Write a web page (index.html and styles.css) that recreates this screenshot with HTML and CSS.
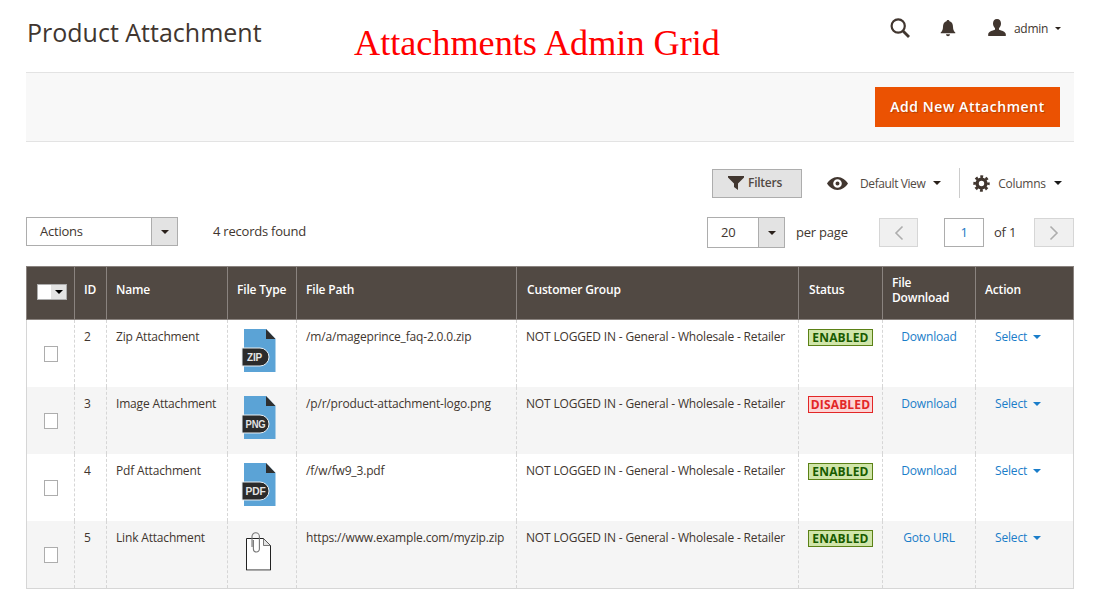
FILE: index.html
```html
<!DOCTYPE html>
<html lang="en">
<head>
    <meta charset="UTF-8">
    <title>Product Attachment</title>
    <link rel="stylesheet" href="styles.css">
</head>
<body>

<div class="page">
    <!-- Page header -->
    <header class="page-header">
        <h1>Product Attachment</h1>
        <div class="annotation">Attachments Admin Grid</div>
        <div class="admin-tools">
            <svg class="icon-search" width="22" height="22" viewBox="0 0 22 22"><circle cx="9.200" cy="9" r="6.600" fill="none" stroke="#41362f" stroke-width="2.200"/><path d="M14 14l6 6" stroke="#41362f" stroke-width="2.800" fill="none"/></svg>
            <svg class="icon-bell" width="16" height="18" viewBox="0 0 16 18"><path d="M8 1c1 0 1.400.6 1.500 1.300C12 3 13 5 13 8c0 3 1.200 4.500 2.300 5.500v.8H.7v-.8C1.800 12.500 3 11 3 8c0-3 1-5 3.500-5.700C6.600 1.600 7 1 8 1zM6 15.300h4C10 16.500 9 17.300 8 17.300s-2-.8-2-2z" fill="#41362f"/></svg>
            <svg class="icon-user" width="18" height="18" viewBox="0 0 18 18"><path d="M9 0c2.600 0 4 1.900 4 4.500 0 2-1 3.800-2 4.700v1.500c2.500.8 6.500 1.700 6.800 4.300V17H.2v-2c.3-2.600 4.300-3.500 6.800-4.300V9.200C6 8.300 5 6.500 5 4.500 5 1.900 6.400 0 9 0z" fill="#41362f"/></svg>
            <span class="admin-name">admin</span>
            <span class="caret caret-small"></span>
        </div>
    </header>

    <!-- Action bar -->
    <div class="action-bar">
        <button class="btn-primary">Add New Attachment</button>
    </div>

    <!-- Grid controls -->
    <div class="grid-tools">
        <button class="btn-filters">
            <svg width="16" height="14" viewBox="0 0 16 14"><path d="M0 0h16v1.500L10 7.500V14L6 11V7.500L0 1.500z" fill="#41362f"/></svg>
            Filters
        </button>
        <div class="tool-view">
            <svg width="21" height="13" viewBox="0 0 21 13"><path fill-rule="evenodd" d="M10.500 0C15 0 18.800 3 21 6.500 18.800 10 15 13 10.500 13S2.200 10 0 6.500C2.200 3 6 0 10.500 0zm0 2.200a4.300 4.300 0 100 8.600 4.300 4.300 0 000-8.600zm0 2.300a2 2 0 110 4 2 2 0 010-4z" fill="#41362f"/></svg>
            <span class="view-label">Default View</span>
            <span class="caret caret-small"></span>
        </div>
        <div class="tool-columns">
            <svg width="17" height="17" viewBox="0 0 17 17"><circle cx="8.500" cy="8.500" r="4.400" fill="none" stroke="#41362f" stroke-width="3.400"/><circle cx="8.500" cy="8.500" r="6.800" fill="none" stroke="#41362f" stroke-width="2.800" stroke-dasharray="2.800 2.540" stroke-dashoffset="1.400"/></svg>
            <span class="view-label">Columns</span>
            <span class="caret"></span>
        </div>
    </div>

    <div class="grid-pager">
        <div class="select-box actions-select">
            <span class="select-value">Actions</span>
            <span class="select-arrow"><span class="caret caret-small"></span></span>
        </div>
        <span class="records">4 records found</span>
        <div class="select-box per-page-select">
            <span class="select-value">20</span>
            <span class="select-arrow"><span class="caret caret-small"></span></span>
        </div>
        <span class="per-page">per page</span>
        <span class="page-btn page-prev"><svg width="10" height="16" viewBox="0 0 10 16"><path d="M8.500 1.500L2 8l6.500 6.500" fill="none" stroke="#adadad" stroke-width="1.600"/></svg></span>
        <span class="page-input">1</span>
        <span class="page-of">of 1</span>
        <span class="page-btn page-next"><svg width="10" height="16" viewBox="0 0 10 16"><path d="M1.500 1.500L8 8l-6.500 6.500" fill="none" stroke="#adadad" stroke-width="1.600"/></svg></span>
    </div>

    <!-- Attachments grid -->
    <table class="grid">
        <colgroup>
            <col class="col-check">
            <col class="col-id">
            <col class="col-name">
            <col class="col-type">
            <col class="col-path">
            <col class="col-group">
            <col class="col-status">
            <col class="col-download">
            <col class="col-action">
        </colgroup>
        <thead>
            <tr>
                <th><span class="mass-select"><span class="mass-box"></span><span class="mass-arrow"><span class="caret caret-small"></span></span></span></th>
                <th>ID</th>
                <th>Name</th>
                <th class="th-nowrap">File Type</th>
                <th>File Path</th>
                <th class="th-wide">Customer Group</th>
                <th class="th-wide">Status</th>
                <th>File Download</th>
                <th>Action</th>
            </tr>
        </thead>
        <tbody>
            <tr>
                <td class="cell-check"><span class="checkbox"></span></td>
                <td>2</td>
                <td>Zip Attachment</td>
                <td class="cell-icon">
                    <svg class="file-icon" width="34" height="44" viewBox="0 0 34 44"><path d="M2 0h22l9.500 10v33H2z" fill="#5ba3d6"/><path d="M24 0l9.500 10H24z" fill="#2f2f2f"/><path d="M0 19h18a9 9 0 010 18H0z" fill="#2b2b2b" stroke="#e8eef2"/><text x="5" y="32" class="file-ext" textLength="15" lengthAdjust="spacingAndGlyphs">ZIP</text></svg>
                </td>
                <td>/m/a/mageprince_faq-2.0.0.zip</td>
                <td>NOT LOGGED IN - General - Wholesale - Retailer</td>
                <td><span class="badge badge-enabled">ENABLED</span></td>
                <td class="cell-link"><a>Download</a></td>
                <td class="cell-select"><a>Select</a><span class="caret caret-small caret-blue"></span></td>
            </tr>
            <tr>
                <td class="cell-check"><span class="checkbox"></span></td>
                <td>3</td>
                <td>Image Attachment</td>
                <td class="cell-icon">
                    <svg class="file-icon" width="34" height="44" viewBox="0 0 34 44"><path d="M2 0h22l9.500 10v33H2z" fill="#5ba3d6"/><path d="M24 0l9.500 10H24z" fill="#2f2f2f"/><path d="M0 19h18a9 9 0 010 18H0z" fill="#2b2b2b" stroke="#e8eef2"/><text x="3.500" y="32" class="file-ext" textLength="20" lengthAdjust="spacingAndGlyphs">PNG</text></svg>
                </td>
                <td>/p/r/product-attachment-logo.png</td>
                <td>NOT LOGGED IN - General - Wholesale - Retailer</td>
                <td><span class="badge badge-disabled">DISABLED</span></td>
                <td class="cell-link"><a>Download</a></td>
                <td class="cell-select"><a>Select</a><span class="caret caret-small caret-blue"></span></td>
            </tr>
            <tr>
                <td class="cell-check"><span class="checkbox"></span></td>
                <td>4</td>
                <td>Pdf Attachment</td>
                <td class="cell-icon">
                    <svg class="file-icon" width="34" height="44" viewBox="0 0 34 44"><path d="M2 0h22l9.500 10v33H2z" fill="#5ba3d6"/><path d="M24 0l9.500 10H24z" fill="#2f2f2f"/><path d="M0 19h18a9 9 0 010 18H0z" fill="#2b2b2b" stroke="#e8eef2"/><text x="3.500" y="32" class="file-ext" textLength="20" lengthAdjust="spacingAndGlyphs">PDF</text></svg>
                </td>
                <td>/f/w/fw9_3.pdf</td>
                <td>NOT LOGGED IN - General - Wholesale - Retailer</td>
                <td><span class="badge badge-enabled">ENABLED</span></td>
                <td class="cell-link"><a>Download</a></td>
                <td class="cell-select"><a>Select</a><span class="caret caret-small caret-blue"></span></td>
            </tr>
            <tr>
                <td class="cell-check"><span class="checkbox"></span></td>
                <td>5</td>
                <td>Link Attachment</td>
                <td class="cell-icon">
                    <svg class="file-icon" width="34" height="44" viewBox="0 0 34 44"><path d="M4.500 8.500h17l7 7v24.500h-24z" fill="#fff" stroke="#222" stroke-width="1"/><path d="M21.500 8.500l7 7h-7z" fill="#e4e4e4" stroke="#444" stroke-width=".7"/><path d="M4.500 40.500h24" stroke="#aaa" stroke-width="1"/><path d="M10 17V6.500a3.700 3.700 0 017.400 0V19a3 3 0 01-6 0V10" fill="none" stroke="#777" stroke-width="1.100"/></svg>
                </td>
                <td>https://www.example.com/myzip.zip</td>
                <td>NOT LOGGED IN - General - Wholesale - Retailer</td>
                <td><span class="badge badge-enabled">ENABLED</span></td>
                <td class="cell-link"><a>Goto URL</a></td>
                <td class="cell-select"><a>Select</a><span class="caret caret-small caret-blue"></span></td>
            </tr>
        </tbody>
    </table>
</div>

</body>
</html>
```

FILE: styles.css
```css
html, body {
    margin: 0;
    padding: 0;
}
body {
    font-family: "Open Sans", sans-serif;
    font-size: 12px;
    color: #41362f;
    background-color: #fff;
    overflow: hidden;
}
.page {
    padding: 0 23px 0 26px;
}
.page-header {
    display: flex;
    align-items: flex-start;
    height: 72px;
}
h1 {
    margin: 13px 0 0 1px;
    width: 327px;
    font-size: 25px;
    line-height: 38px;
    font-weight: 400;
    white-space: nowrap;
}
.annotation {
    margin-top: 22px;
    font-family: "Liberation Serif", serif;
    font-size: 36.200px;
    line-height: 42px;
    color: #f00;
    white-space: nowrap;
}
.admin-tools {
    display: flex;
    align-items: center;
    margin-left: auto;
    margin-top: 18px;
    height: 20px;
    padding-right: 13px;
}
.icon-search {
    margin-right: 29px;
}
.icon-bell {
    margin-right: 32px;
}
.icon-user {
    margin-right: 8px;
}
.admin-name {
    margin-right: 7px;
    letter-spacing: -.3px;
}
.admin-tools .caret {
    border-width: 3.500px 3.500px 0;
}
.caret {
    display: inline-block;
    width: 0;
    height: 0;
    border-left: 4px solid transparent;
    border-right: 4px solid transparent;
    border-top: 4px solid #1a1a1a;
}
.caret-small {
    border-top-color: #2a211b;
}
.caret-blue {
    border-top-color: #1a7dc9;
    margin-left: 6px;
    vertical-align: 2px;
}
.action-bar {
    display: flex;
    justify-content: flex-end;
    align-items: center;
    height: 68px;
    padding-right: 14px;
    background-color: #f8f8f8;
    border-top: 1px solid #e3e3e3;
    border-bottom: 1px solid #e3e3e3;
}
.btn-primary {
    width: 185px;
    height: 40px;
    padding: 0 0 2px;
    background-color: #eb5202;
    color: #fff;
    font-family: "Open Sans", sans-serif;
    font-size: 14px;
    font-weight: 600;
    letter-spacing: .55px;
    text-shadow: 1px 1px 1px rgba(0, 0, 0, .25);
    border: none;
}
.grid-tools {
    display: flex;
    align-items: center;
    height: 30px;
    margin-top: 26px;
    padding-left: 686px;
}
.btn-filters {
    display: flex;
    align-items: center;
    justify-content: center;
    gap: 4px;
    width: 90px;
    height: 29px;
    padding: 0 4px 1px 0;
    background-color: #e3e3e3;
    border: 1px solid #adadad;
    color: #514943;
    font-family: "Open Sans", sans-serif;
    font-size: 12px;
    font-weight: 600;
    letter-spacing: -.25px;
}
.tool-view {
    display: flex;
    align-items: center;
    margin-left: 25px;
    padding-right: 18px;
    height: 30px;
    border-right: 1px solid #ccc;
}
.tool-columns {
    display: flex;
    align-items: center;
    margin-left: 13px;
}
.tool-columns .view-label {
    margin-left: 8px;
    margin-right: 0;
    letter-spacing: -.3px;
}
.tool-columns .caret {
    margin-left: 8px;
}
.view-label {
    margin-left: 12px;
    margin-right: 8px;
    font-size: 12px;
    letter-spacing: -.4px;
    color: #514943;
}
.grid-pager {
    display: flex;
    align-items: center;
    height: 31px;
    margin-top: 19px;
    font-size: 13px;
    letter-spacing: -.22px;
}
.select-box {
    display: flex;
    height: 29px;
    box-sizing: border-box;
    border: 1px solid #adadad;
    background-color: #fff;
}
.select-value {
    flex: 1;
    line-height: 27px;
    padding-left: 13px;
}
.select-arrow {
    display: flex;
    align-items: center;
    justify-content: center;
    width: 25px;
    background-color: #e3e3e3;
    border-left: 1px solid #adadad;
}
.actions-select {
    width: 152px;
    margin-bottom: 2px;
}
.records {
    margin-left: 35px;
    margin-bottom: 4px;
    width: 494px;
}
.per-page-select {
    width: 78px;
    height: 31px;
}
.per-page-select .select-value {
    line-height: 29px;
    padding-left: 13px;
}
.per-page {
    margin-left: 11px;
    margin-bottom: 2px;
    width: 83px;
}
.page-btn {
    display: flex;
    align-items: center;
    justify-content: center;
    box-sizing: border-box;
    width: 40px;
    height: 29px;
    background-color: #f0f0f0;
    border: 1px solid #d6d6d6;
}
.page-prev {
    width: 39px;
}
.page-input {
    box-sizing: border-box;
    width: 40px;
    height: 29px;
    margin-left: 26px;
    border: 1px solid #adadad;
    line-height: 27px;
    text-align: center;
    color: #1979c3;
}
.page-of {
    margin-left: 10px;
    margin-bottom: 2px;
    width: 40px;
}
.grid {
    width: 1047px;
    margin-top: 18px;
    table-layout: fixed;
    border-collapse: collapse;
    font-size: 12px;
    letter-spacing: -.17px;
}
.col-check { width: 48px; }
.col-id { width: 32px; }
.col-name { width: 121px; }
.col-type { width: 69px; }
.col-path { width: 220px; }
.col-group { width: 282px; }
.col-status { width: 84px; }
.col-download { width: 93px; }
.col-action { width: 98px; }
.grid th {
    height: 53px;
    box-sizing: border-box;
    padding: 0 9px 7px;
    background-color: #514943;
    border: 1px solid #8a837f;
    color: #fff;
    font-weight: 600;
    text-align: left;
    line-height: 15px;
}
.grid th.th-nowrap {
    white-space: nowrap;
}
.grid th.th-wide {
    padding-left: 10px;
}
.grid td {
    height: 67px;
    box-sizing: border-box;
    padding: 9px 9px 0;
    vertical-align: top;
    line-height: 16px;
    border-left: 1px dashed #d6d6d6;
    border-right: 1px dashed #d6d6d6;
    white-space: nowrap;
}
.grid tbody tr:nth-child(even) td {
    background-color: #f5f5f5;
}
.grid tbody tr:last-child td {
    height: 68px;
    border-bottom: 1px solid #d6d6d6;
}
.grid td:first-child {
    border-left: 1px solid #d6d6d6;
}
.grid td:last-child {
    border-right: 1px solid #d6d6d6;
}
.mass-select {
    display: flex;
    width: 28px;
    height: 14px;
    margin: 5px 0 0 1px;
    border: 1px solid #adadad;
}
.mass-box {
    width: 13px;
    background-color: #fff;
}
.mass-arrow {
    display: flex;
    align-items: center;
    justify-content: center;
    flex: 1;
    background-color: #e3e3e3;
}
.mass-arrow .caret {
    border-top-color: #000;
}
.grid td.cell-check {
    padding: 26px 0 0 17px;
}
.checkbox {
    display: block;
    width: 12px;
    height: 14px;
    background-color: #fff;
    border: 1px solid #adadad;
}
.grid td.cell-icon {
    padding: 9px 0 0 14px;
}
.file-icon {
    display: block;
    overflow: visible;
}
.file-ext {
    font-family: "Liberation Sans", sans-serif;
    font-size: 11px;
    font-weight: 700;
    fill: #e4e4e4;
}
.badge {
    display: block;
    box-sizing: border-box;
    width: 65px;
    height: 17px;
    line-height: 15px;
    text-align: center;
    font-weight: 700;
    letter-spacing: .15px;
}
.badge-enabled {
    background-color: #d0e5a9;
    border: 1px solid #5b8116;
    color: #185b00;
}
.badge-disabled {
    background-color: #fcd6d6;
    border: 1px solid #e22626;
    color: #e22626;
}
.cell-link {
    text-align: center;
    color: #1a7dc9;
}
.grid td.cell-select {
    padding-left: 19px;
    color: #1a7dc9;
}
```
